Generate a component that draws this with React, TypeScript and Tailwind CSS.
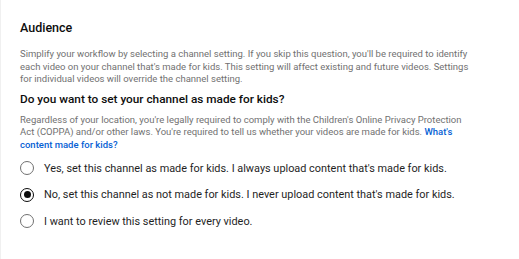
const options = [
  "Yes, set this channel as made for kids. I always upload content that's made for kids.",
  "No, set this channel as not made for kids. I never upload content that's made for kids.",
  "I want to review this setting for every video.",
];

export default function App() {
  const selected = 1;

  return (
    <div className="w-[519px] h-[259px] bg-white border-l border-[#f0f0f0] overflow-hidden font-['Roboto',sans-serif]">
      <div className="pl-[19px] pt-[20px]">
        <h2 className="text-[12.5px] font-medium text-[#0d0d0d] leading-[16px]">Audience</h2>
        <p className="mt-[12px] w-[490px] text-[9.5px] leading-[12.5px] text-[#717171]">
          Simplify your workflow by selecting a channel setting. If you skip this question, you'll be required to identify
          <br />
          each video on your channel that's made for kids. This setting will affect existing and future videos. Settings
          <br />
          for individual videos will override the channel setting.
        </p>
        <h3 className="mt-[4px] text-[11.8px] font-medium text-[#0d0d0d] leading-[18px]">
          Do you want to set your channel as made for kids?
        </h3>
        <p className="mt-[6px] w-[490px] text-[9.5px] leading-[12.7px] text-[#717171]">
          Regardless of your location, you're legally required to comply with the Children's Online Privacy Protection
          <br />
          Act (COPPA) and/or other laws. You're required to tell us whether your videos are made for kids.{" "}
          <a className="text-[#065fd4] font-medium">
            What's
            <br />
            content made for kids?
          </a>
        </p>
        <div className="mt-[9px] flex flex-col gap-[11.5px]">
          {options.map((text, i) => (
            <label key={i} className="flex items-center gap-[10px] cursor-pointer">
              <span
                className={`w-[14px] h-[14px] rounded-full border-[1.5px] flex items-center justify-center shrink-0 ${
                  i === selected ? "border-[#0d0d0d]" : "border-[#707070]"
                }`}
              >
                {i === selected && <span className="w-[7px] h-[7px] rounded-full bg-[#0d0d0d]" />}
              </span>
              <span className="text-[10.9px] leading-[15px] text-[#1f1f1f]">{text}</span>
            </label>
          ))}
        </div>
      </div>
    </div>
  );
}
